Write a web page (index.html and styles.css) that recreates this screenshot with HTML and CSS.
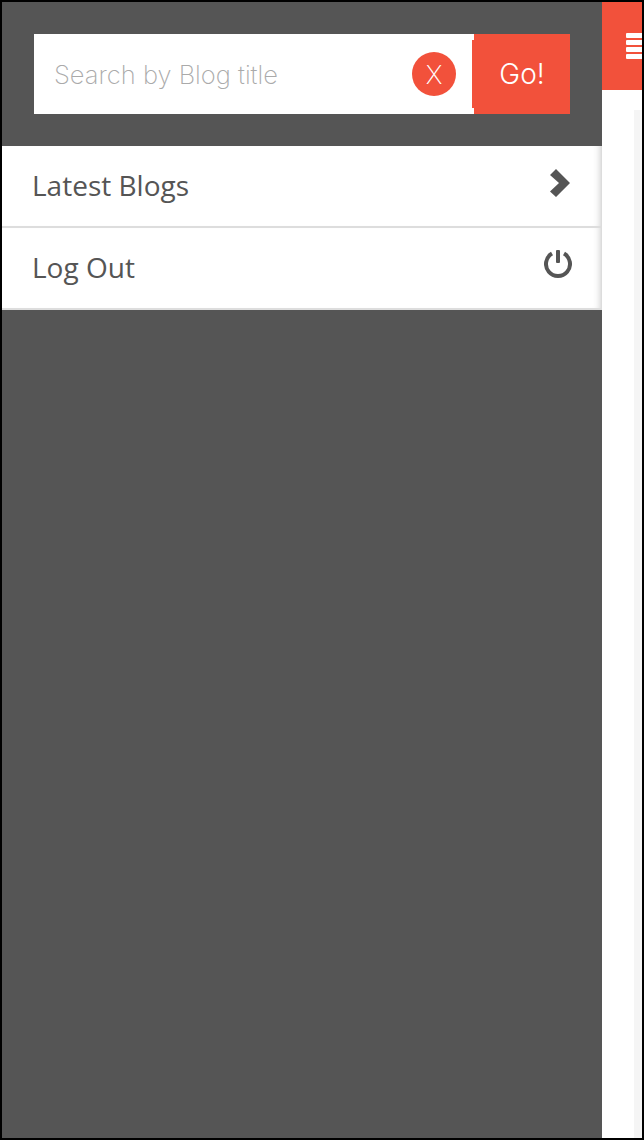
FILE: index.html
```html
<!DOCTYPE html>
<html lang="en">
<head>
  <meta charset="UTF-8">
  <meta name="viewport" content="width=device-width, initial-scale=1.0">
  <title>Blogs</title>
  <link rel="stylesheet" href="styles.css">
</head>
<body>
  <div class="frame">
    <nav class="drawer">
      <form class="search">
        <div class="search-box">
          <input class="search-input" type="text" placeholder="Search by Blog title">
          <button class="clear-btn" type="button">X</button>
        </div>
        <button class="go-btn" type="button">Go!</button>
      </form>
      <ul class="menu">
        <li class="menu-item">
          <span>Latest Blogs</span>
          <svg class="icon-chevron" width="22" height="28" viewBox="0 0 22 28">
            <path d="M0 6 6 0 20 14 6 28 0 22.5 9 14Z" fill="#555"/>
          </svg>
        </li>
        <li class="menu-item">
          <span>Log Out</span>
          <svg class="icon-power" width="28" height="28" viewBox="0 0 28 28">
            <path d="M8 3.6A12 12 0 1 0 20 3.6" fill="none" stroke="#555" stroke-width="4"/>
            <rect x="12" y="0" width="4" height="13" rx="1" fill="#555"/>
          </svg>
        </li>
      </ul>
    </nav>
    <aside class="side">
      <div class="side-bar">
        <div class="burger">
          <i></i><i></i><i></i><i></i>
        </div>
      </div>
      <div class="side-page"></div>
    </aside>
  </div>
</body>
</html>
```

FILE: styles.css
```css
* {
  padding: 0;
  margin: 0;
  box-sizing: border-box;
}

body {
  background-color: #fff;
}

.frame {
  display: flex;
  height: 1140px;
  border: 2px solid #000;
  overflow: hidden;
}

.drawer {
  width: 600px;
  flex-shrink: 0;
  background-color: #555;
}

.search {
  display: flex;
  padding: 32px;
}

.search-box {
  display: flex;
  align-items: center;
  width: 440px;
  height: 80px;
  padding: 0 18px 0 20px;
  background-color: #fff;
}

.search-input {
  flex: 1;
  min-width: 0;
  border: none;
  outline: none;
  font-family: "Inter", "Liberation Sans", sans-serif;
  font-weight: 200;
  font-size: 25.5px;
  color: #555;
}

.search-input::placeholder {
  color: #aaa;
  opacity: 1;
}

.clear-btn {
  width: 44px;
  height: 44px;
  border: none;
  border-radius: 50%;
  background-color: #f2513b;
  color: #fff;
  font-family: "Inter", "Liberation Sans", sans-serif;
  font-weight: 200;
  font-size: 26px;
}

.go-btn {
  position: relative;
  width: 96px;
  height: 80px;
  border: none;
  background-color: #f2513b;
  color: #fff;
  font-family: "Inter", "Liberation Sans", sans-serif;
  font-weight: 300;
  font-size: 28px;
}

/* small overlap of the button on the input */
.go-btn::before {
  content: "";
  position: absolute;
  left: -2px;
  top: 6px;
  bottom: 6px;
  width: 2px;
  background-color: #f2513b;
}

.menu {
  list-style: none;
}

.menu-item {
  display: flex;
  align-items: center;
  justify-content: space-between;
  height: 82px;
  padding: 0 30px 2px 30px;
  border-bottom: 2px solid #ddd;
  background-color: #fff;
  box-shadow: inset -8px 0 8px -8px rgba(0, 0, 0, 0.3);
  font-family: "Open Sans", sans-serif;
  font-size: 28px;
  color: #555;
}

.icon-chevron {
  margin-bottom: 4px;
}

.icon-power {
  margin-bottom: 6px;
}

.side {
  flex: 1;
  display: flex;
  flex-direction: column;
}

.side-bar {
  display: flex;
  justify-content: flex-end;
  align-items: center;
  height: 88px;
  background-color: #f2513b;
  overflow: hidden;
}

.burger {
  display: flex;
  flex-direction: column;
  gap: 2px;
  width: 16px;
}

.burger i {
  display: block;
  height: 5px;
  background-color: #fff;
  border-radius: 1px 0 0 1px;
}

.side-page {
  flex: 1;
  margin-top: 20px;
  border-left: 32px solid #fff;
  background-color: #f5f5f5;
}
```
